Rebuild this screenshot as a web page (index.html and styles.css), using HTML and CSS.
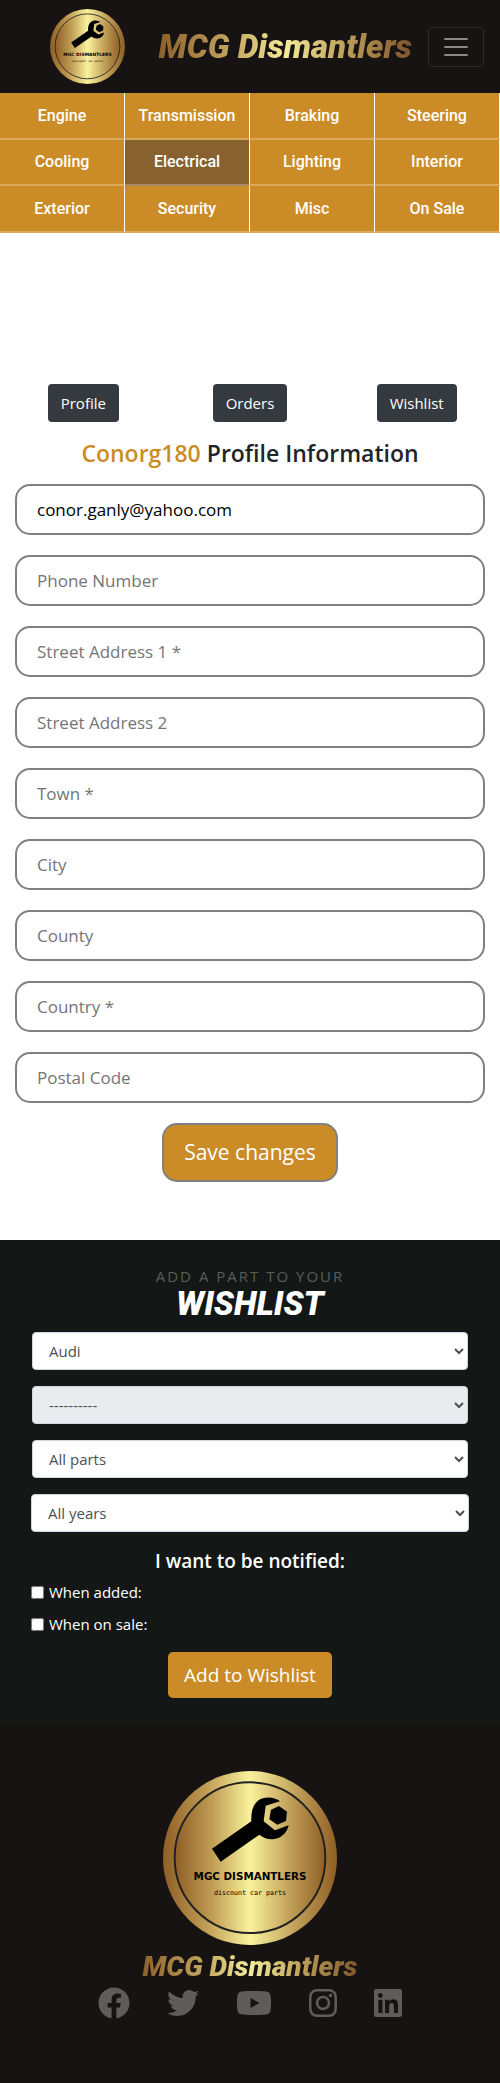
FILE: index.html
```html
<!DOCTYPE html>
<html lang="en">
<head>
<meta charset="utf-8">
<meta name="viewport" content="width=device-width, initial-scale=1">
<title>MCG Dismantlers</title>
<link rel="stylesheet" href="styles.css">
</head>
<body>
<svg class="defs" aria-hidden="true">
  <defs>
    <linearGradient id="gold">
      <stop offset="0" stop-color="#8f5e25"/><stop offset=".25" stop-color="#c09d55"/><stop offset=".5" stop-color="#f9f29d"/><stop offset=".75" stop-color="#c4a45c"/><stop offset="1" stop-color="#8f5e25"/>
    </linearGradient>
    <symbol id="logo" viewBox="98 92 522 522">
      <circle cx="359" cy="353" r="261" fill="url(#gold)"/>
      <circle cx="359" cy="352" r="226" fill="url(#gold)" stroke="#222" stroke-width="6"/>
      <path d="M245 325 363 243C361 205 373 180 400 173 420 168 438 174 449 183L406 196 400 243 434 270 475 255C470 280 450 295 428 297 410 298 398 291 387 283L271 364Z"/>
      <path d="M422 208 446 197 470 214 467 242 441 253 417 237Z"/>
      <text class="logo-name" x="359" y="420" text-anchor="middle">MGC DISMANTLERS</text>
      <text class="logo-tag" x="359" y="464" text-anchor="middle">discount car parts</text>
    </symbol>
  </defs>
</svg>
<header class="header">
  <a class="header-logo" href="#"><svg role="img" aria-label="MGC Dismantlers"><use href="#logo"/></svg></a>
  <a class="brand header-brand" href="#">MCG Dismantlers</a>
  <button class="toggler" type="button" aria-label="Toggle navigation"><svg viewBox="0 0 30 30"><path stroke="#8b8989" stroke-width="2" stroke-linecap="round" d="M4 7h22M4 15h22M4 23h22"/></svg></button>
</header>
<nav class="categories">
  <a href="#">Engine</a><a href="#">Transmission</a><a href="#">Braking</a><a href="#">Steering</a>
  <a href="#">Cooling</a><a class="active" href="#">Electrical</a><a href="#">Lighting</a><a href="#">Interior</a>
  <a href="#">Exterior</a><a href="#">Security</a><a href="#">Misc</a><a href="#">On Sale</a>
</nav>
<main class="profile">
  <div class="tabs">
    <div><a class="tab" href="#">Profile</a></div>
    <div><a class="tab" href="#">Orders</a></div>
    <div><a class="tab" href="#">Wishlist</a></div>
  </div>
  <h1 class="profile-title"><span>Conorg180</span> Profile Information</h1>
  <form class="profile-form">
    <input type="email" aria-label="Email" value="conor.ganly@yahoo.com">
    <input type="text" aria-label="Phone Number" placeholder="Phone Number">
    <input type="text" aria-label="Street Address 1" placeholder="Street Address 1 *">
    <input type="text" aria-label="Street Address 2" placeholder="Street Address 2">
    <input type="text" aria-label="Town" placeholder="Town *">
    <input type="text" aria-label="City" placeholder="City">
    <input type="text" aria-label="County" placeholder="County">
    <input type="text" aria-label="Country" placeholder="Country *">
    <input type="text" aria-label="Postal Code" placeholder="Postal Code">
    <button class="save" type="submit">Save changes</button>
  </form>
</main>
<section class="wishlist">
  <p class="eyebrow">ADD A PART TO YOUR</p>
  <h2 class="wishlist-title">WISHLIST</h2>
  <form>
    <div class="selects">
      <select aria-label="Make"><option>Audi</option></select>
      <select aria-label="Model" disabled><option>----------</option></select>
      <select aria-label="Part"><option>All parts</option></select>
      <select class="wide" aria-label="Year"><option>All years</option></select>
    </div>
    <h3 class="notify-title">I want to be notified:</h3>
    <label class="check"><input type="checkbox"> When added:</label>
    <label class="check"><input type="checkbox"> When on sale:</label>
    <button class="add" type="submit">Add to Wishlist</button>
  </form>
</section>
<footer class="footer">
  <svg class="footer-logo" role="img" aria-label="MGC Dismantlers"><use href="#logo"/></svg>
  <p class="brand footer-brand">MCG Dismantlers</p>
  <div class="social">
    <a href="#" aria-label="Facebook"><svg viewBox="0 0 512 512"><path d="M504 256C504 119 393 8 256 8S8 119 8 256c0 123.78 90.69 226.38 209.25 245V327.69h-63V256h63v-54.64c0-62.15 37-96.48 93.67-96.48 27.14 0 55.52 4.84 55.52 4.84v61h-31.28c-30.8 0-40.41 19.12-40.41 38.73V256h68.78l-11 71.69h-57.78V501C413.31 482.38 504 379.78 504 256z"/></svg></a>
    <a href="#" aria-label="Twitter"><svg viewBox="0 0 512 512"><path d="M459.37 151.716c.325 4.548.325 9.097.325 13.645 0 138.72-105.583 298.558-298.558 298.558-59.452 0-114.68-17.219-161.137-47.106 8.447.974 16.568 1.299 25.34 1.299 49.055 0 94.213-16.568 130.274-44.832-46.132-.975-84.792-31.188-98.112-72.772 6.498.974 12.995 1.624 19.818 1.624 9.421 0 18.843-1.3 27.614-3.573-48.081-9.747-84.143-51.98-84.143-102.985v-1.299c13.969 7.797 30.214 12.67 47.431 13.319-28.264-18.843-46.781-51.005-46.781-87.391 0-19.492 5.197-37.36 14.294-52.954 51.655 63.675 129.3 105.258 216.365 109.807-1.624-7.797-2.599-15.918-2.599-24.04 0-57.828 46.782-104.934 104.934-104.934 30.213 0 57.502 12.67 76.67 33.137 23.715-4.548 46.456-13.32 66.599-25.34-7.798 24.366-24.366 44.833-46.132 57.827 21.117-2.273 41.584-8.122 60.426-16.243-14.292 20.791-32.161 39.308-52.628 54.253z"/></svg></a>
    <a href="#" aria-label="YouTube"><svg viewBox="0 0 576 512"><path d="M549.655 124.083c-6.281-23.65-24.787-42.276-48.284-48.597C458.781 64 288 64 288 64S117.22 64 74.629 75.486c-23.497 6.322-42.003 24.947-48.284 48.597-11.412 42.867-11.412 132.305-11.412 132.305s0 89.438 11.412 132.305c6.281 23.65 24.787 41.5 48.284 47.821C117.22 448 288 448 288 448s170.78 0 213.371-11.486c23.497-6.321 42.003-24.171 48.284-47.821 11.412-42.867 11.412-132.305 11.412-132.305s0-89.438-11.412-132.305zm-317.51 213.508V175.185l142.739 81.205-142.739 81.201z"/></svg></a>
    <a href="#" aria-label="Instagram"><svg viewBox="0 0 448 512"><path d="M224.1 141c-63.6 0-114.9 51.3-114.9 114.9s51.3 114.9 114.9 114.9S339 319.5 339 255.9 287.7 141 224.1 141zm0 189.6c-41.1 0-74.7-33.5-74.7-74.7s33.5-74.7 74.7-74.7 74.7 33.5 74.7 74.7-33.6 74.7-74.7 74.7zm146.4-194.3c0 14.9-12 26.8-26.8 26.8-14.9 0-26.8-12-26.8-26.8s12-26.8 26.8-26.8 26.8 12 26.8 26.8zm76.1 27.2c-1.7-35.9-9.9-67.7-36.2-93.9-26.2-26.2-58-34.4-93.9-36.2-37-2.1-147.9-2.1-184.9 0-35.8 1.7-67.6 9.9-93.9 36.1s-34.4 58-36.2 93.9c-2.1 37-2.1 147.9 0 184.9 1.7 35.9 9.9 67.7 36.2 93.9s58 34.4 93.9 36.2c37 2.1 147.9 2.1 184.9 0 35.9-1.7 67.7-9.9 93.9-36.2 26.2-26.2 34.4-58 36.2-93.9 2.1-37 2.1-147.8 0-184.8zM398.8 388c-7.8 19.6-22.9 34.7-42.6 42.6-29.5 11.7-99.5 9-132.1 9s-102.7 2.6-132.1-9c-19.6-7.8-34.7-22.9-42.6-42.6-11.7-29.5-9-99.5-9-132.1s-2.6-102.7 9-132.1c7.8-19.6 22.9-34.7 42.6-42.6 29.5-11.7 99.5-9 132.1-9s102.7-2.6 132.1 9c19.6 7.8 34.7 22.9 42.6 42.6 11.7 29.5 9 99.5 9 132.1s2.7 102.7-9 132.1z"/></svg></a>
    <a href="#" aria-label="LinkedIn"><svg viewBox="0 0 448 512"><path d="M416 32H31.9C14.3 32 0 46.5 0 64.3v383.4C0 465.5 14.3 480 31.9 480H416c17.6 0 32-14.5 32-32.3V64.3c0-17.8-14.4-32.3-32-32.3zM135.4 416H69V202.2h66.5V416zm-33.2-243c-21.3 0-38.5-17.3-38.5-38.5S80.9 96 102.2 96c21.2 0 38.5 17.3 38.5 38.5 0 21.3-17.2 38.5-38.5 38.5zm282.1 243h-66.4V312c0-24.8-.5-56.7-34.5-56.7-34.6 0-39.9 27-39.9 54.9V416h-66.4V202.2h63.7v29.2h.9c8.9-16.8 30.6-34.5 62.9-34.5 67.2 0 79.7 44.3 79.7 101.9V416z"/></svg></a>
  </div>
</footer>
</body>
</html>
```
FILE: styles.css
```css
* { box-sizing: border-box; }
body {
  margin: 0;
  background: #fff;
  color: #212529;
  font: 15px/24px "Open Sans", "Noto Sans", sans-serif;
}
h1, h2, h3, p { margin: 0; }
a { color: inherit; text-decoration: none; }
input, select, button { font: inherit; }
.defs { position: absolute; width: 0; height: 0; }
.logo-name { font: 700 31px "DejaVu Sans", sans-serif; }
.logo-tag { font: 20px "DejaVu Sans Mono", monospace; }

.header {
  display: flex;
  align-items: center;
  padding: 9px 16px 9px 50px;
  background: #171313;
}
.header-logo, .header-logo svg { display: block; width: 75px; height: 75px; }
.brand {
  padding: 0 4px;
  background: linear-gradient(90deg, #8a5c28, #c4a860 30%, #f5ec9a 50%, #c4a860 70%, #7a5028);
  -webkit-background-clip: text;
  background-clip: text;
  color: transparent;
  font: italic 900 33px/40px Roboto, sans-serif;
}
.header-brand { margin: 0 12px 0 auto; }
.toggler {
  width: 56px;
  height: 40px;
  padding: 4px 12px;
  border: 1px solid #2e2a2a;
  border-radius: 4px;
  background: none;
}
.toggler svg { display: block; width: 30px; height: 30px; fill: none; }

.categories {
  display: grid;
  grid-template-columns: repeat(4, minmax(0, 1fr));
  grid-template-rows: 47px 46px 47px;
}
.categories a {
  display: flex;
  align-items: center;
  justify-content: center;
  border-right: 1px solid #fff;
  border-bottom: 2px solid #daa95c;
  background: #cb8c28;
  color: #fff;
  font: 500 16px/24px Roboto, sans-serif;
}
.categories .active { background: #88622e; border-bottom-color: #a58a65; }

.profile { padding: 151px 0 58px; }
.tabs { display: grid; grid-template-columns: repeat(3, 1fr); }
.tabs div { display: flex; justify-content: center; }
.tab {
  padding: 7px 13px;
  border-radius: 4px;
  background: #343a40;
  color: #fff;
}
.profile-title {
  padding: 16px 0;
  font-size: 23px;
  font-weight: 600;
  line-height: 30px;
  text-align: center;
}
.profile-title span { color: #cb8c28; }
.profile-form {
  display: flex;
  flex-direction: column;
  align-items: center;
  gap: 20px;
  padding: 0 15px;
}
.profile-form input {
  width: 100%;
  height: 51px;
  padding: 0 20px;
  border: 2px solid #808080;
  border-radius: 15px;
  background: #fff;
  color: #000;
  font-size: 17px;
}
.profile-form input::placeholder { color: #757575; }
.save {
  padding: 10px 20px;
  border: 2px solid #808080;
  border-radius: 15px;
  background: #cb8c28;
  color: #fff;
  font-size: 21px;
  line-height: 35px;
}

.wishlist { padding: 24px 31px; background: #131716; color: #fff; }
.eyebrow { color: #5b5d5c; letter-spacing: 2px; text-align: center; }
.wishlist-title {
  font: italic 900 33px/32px Roboto, sans-serif;
  text-align: center;
}
.selects { display: grid; gap: 16px; padding: 12px 0 17px; }
.selects select {
  height: 38px;
  margin: 0 1px;
  padding: 0 12px;
  border: 1px solid #ced4da;
  border-radius: 4px;
  background: #fff;
  color: #495057;
}
.selects .wide { margin: 0; }
.selects select:disabled { background: #e9ecef; opacity: 1; }
.notify-title { margin-bottom: 7px; font-size: 19px; font-weight: 600; line-height: 24px; text-align: center; }
.check { display: flex; align-items: center; gap: 5px; margin-bottom: 8px; }
.check input { width: 13px; height: 13px; margin: 0; }
.add {
  display: block;
  margin: 16px auto 0;
  padding: 8px 16px;
  border: 0;
  border-radius: 5px;
  background: #cb8c28;
  color: #fff;
  font-size: 19px;
  line-height: 30px;
}

.footer { padding: 49px 0 64px; background: #171313; }
.footer-logo { display: block; width: 174px; height: 174px; margin: 0 auto; }
.footer-brand { width: max-content; margin: 2px auto 0; font-size: 28px; }
.social {
  display: flex;
  align-items: center;
  justify-content: center;
  gap: 37px;
}
.social svg { display: block; height: 32px; fill: #5f5c5c; }
```
